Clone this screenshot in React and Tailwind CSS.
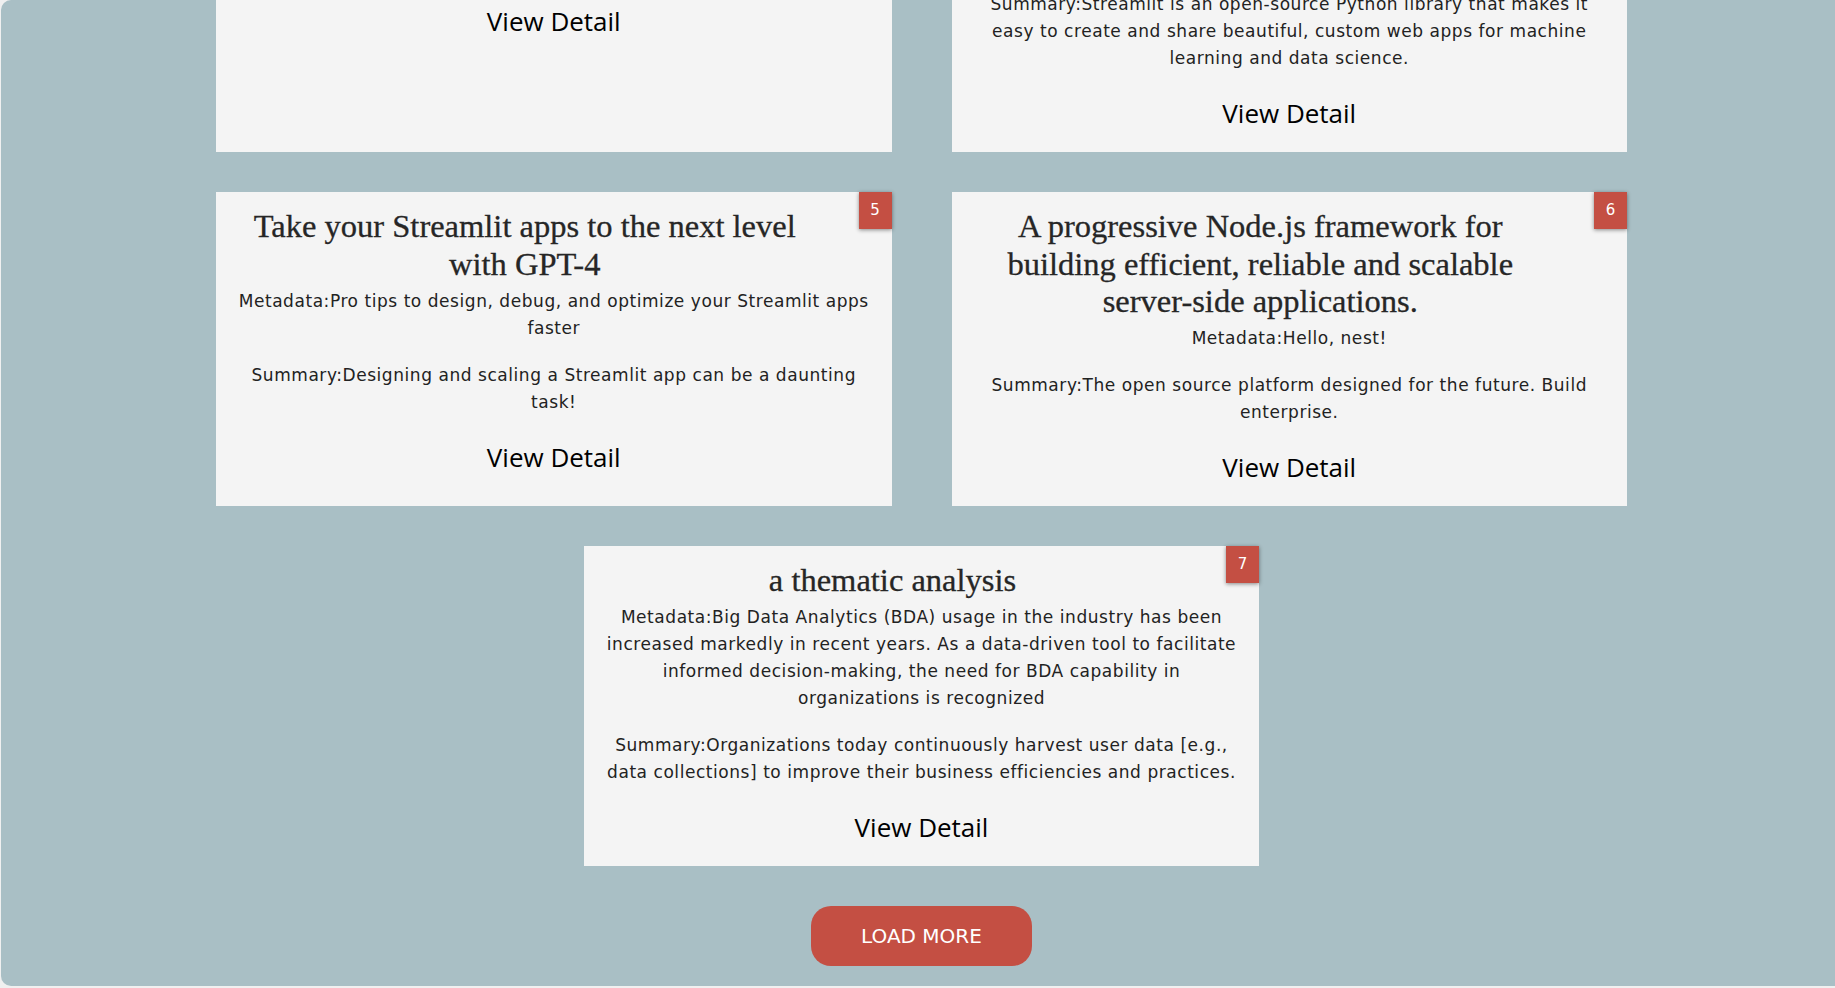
import React from "react";

const body = { fontFamily: '"DejaVu Sans", Verdana, sans-serif' };
const serif = { fontFamily: '"Liberation Serif", "DejaVu Serif", serif' };
const vd = { fontFamily: '"Open Sans", "Noto Sans", sans-serif' };

function Lines({ lines }) {
  return lines.map((l, i) => (
    <React.Fragment key={i}>
      {i > 0 && <br />}
      {l}
    </React.Fragment>
  ));
}

function Badge({ n }) {
  return (
    <div className="absolute top-0 right-0 w-[33px] h-[37px] bg-[#c44f43] text-white text-[15px] flex items-center justify-center shadow-[0_1px_4px_rgba(0,0,0,0.45)]" style={body}>
      {n}
    </div>
  );
}

function ViewDetail({ className = "" }) {
  return (
    <div className={"text-[26px] leading-[36px] text-black " + className} style={vd}>
      View Detail
    </div>
  );
}

function Card({ n, title, meta, summary, className = "" }) {
  return (
    <div className={"relative bg-[#f4f4f4] px-[14px] pt-4 pb-[21px] text-center text-[#222] " + className}>
      {n && <Badge n={n} />}
      {title && (
        <h2 className="text-[32.5px] leading-[37.5px] text-[#262626] ml-[6px] mr-[64px] mb-[4.5px] [-webkit-text-stroke:0.3px_#262626]" style={serif}>
          {title}
        </h2>
      )}
      {meta && (
        <p className="text-[17px] leading-[27px] tracking-[0.55px] whitespace-nowrap mb-[20px]" style={body}>
          <Lines lines={meta} />
        </p>
      )}
      {summary && (
        <p className="text-[17px] leading-[27px] tracking-[0.55px] whitespace-nowrap" style={body}>
          <Lines lines={summary} />
        </p>
      )}
      <ViewDetail className="mt-[23px]" />
    </div>
  );
}

export default function App() {
  return (
    <div className="w-[1835px] h-[988px] bg-[#f0f0f0] overflow-hidden">
      <div className="ml-[1px] h-[986px] bg-[#a9bfc5] rounded-l-[10px] overflow-hidden pl-[215px]">
        <div className="w-[1411px] -mt-[9px]">
          <div className="grid grid-cols-2 gap-x-[60px]">
            <div className="relative bg-[#f4f4f4] text-center">
              <ViewDetail className="mt-[12px]" />
            </div>
            <div className="relative bg-[#f4f4f4] px-[14px] pb-[21px] text-center text-[#222]">
              <p className="text-[17px] leading-[27px] tracking-[0.55px] whitespace-nowrap" style={body}>
                <Lines
                  lines={[
                    "Summary:Streamlit is an open-source Python library that makes it",
                    "easy to create and share beautiful, custom web apps for machine",
                    "learning and data science.",
                  ]}
                />
              </p>
              <ViewDetail className="mt-[23px]" />
            </div>
          </div>
          <div className="grid grid-cols-2 gap-x-[60px] mt-[40px]">
            <Card
              n="5"
              title="Take your Streamlit apps to the next level with GPT-4"
              meta={["Metadata:Pro tips to design, debug, and optimize your Streamlit apps", "faster"]}
              summary={["Summary:Designing and scaling a Streamlit app can be a daunting", "task!"]}
            />
            <Card
              n="6"
              title="A progressive Node.js framework for building efficient, reliable and scalable server-side applications."
              meta={["Metadata:Hello, nest!"]}
              summary={["Summary:The open source platform designed for the future. Build", "enterprise."]}
            />
          </div>
          <div className="flex justify-center mt-[40px]">
            <Card
              className="w-[675px]"
              n="7"
              title="a thematic analysis"
              meta={[
                "Metadata:Big Data Analytics (BDA) usage in the industry has been",
                "increased markedly in recent years. As a data-driven tool to facilitate",
                "informed decision-making, the need for BDA capability in",
                "organizations is recognized",
              ]}
              summary={[
                "Summary:Organizations today continuously harvest user data [e.g.,",
                "data collections] to improve their business efficiencies and practices.",
              ]}
            />
          </div>
          <div className="flex justify-center mt-[40px]">
            <button className="w-[221px] h-[60px] rounded-[20px] bg-[#c44f43] text-white text-[20px]" style={body}>
              LOAD MORE
            </button>
          </div>
        </div>
      </div>
    </div>
  );
}
